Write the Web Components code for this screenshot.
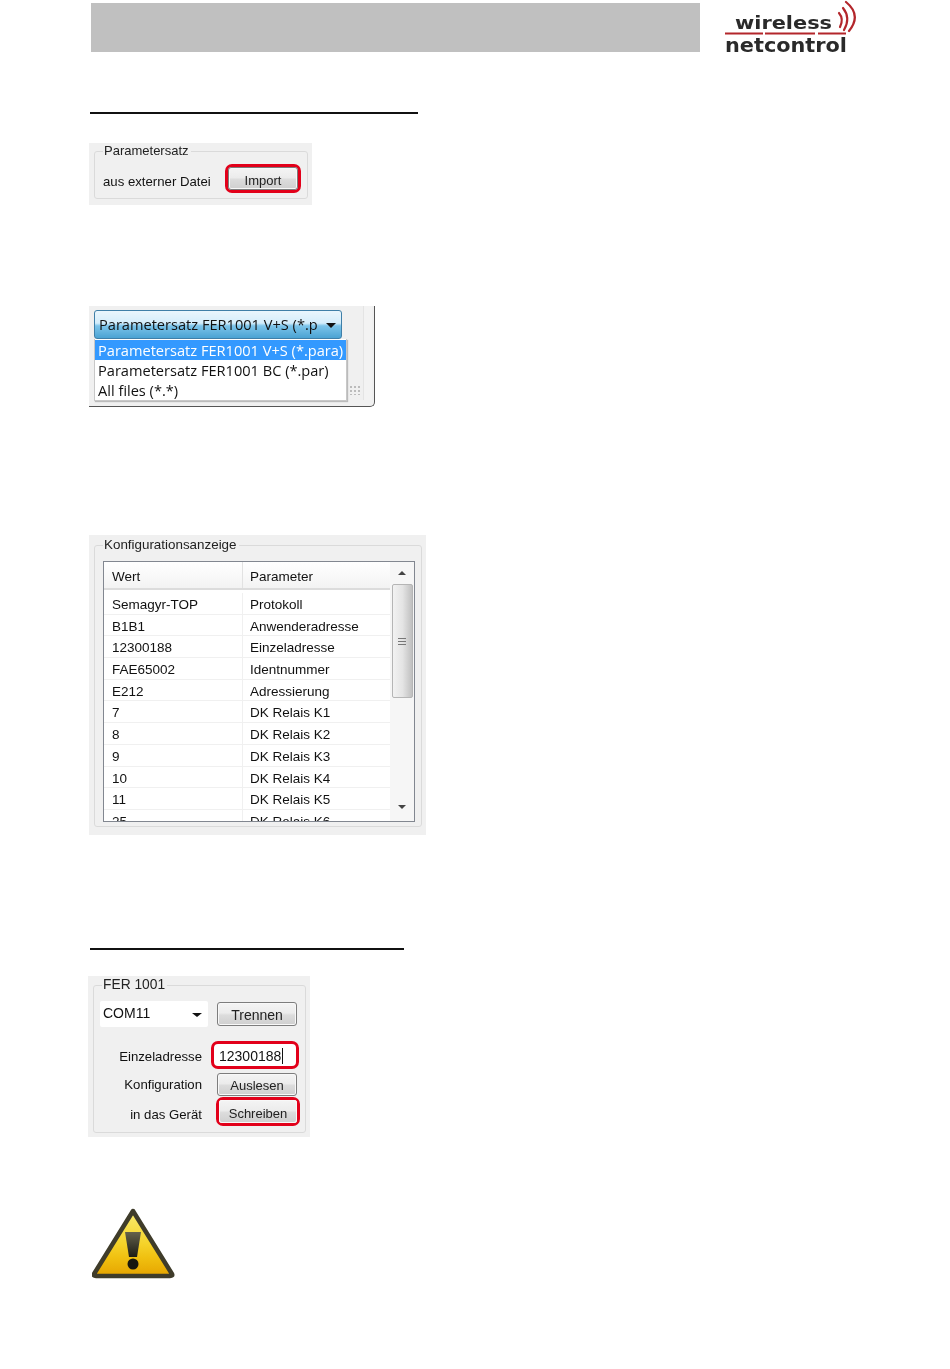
<!DOCTYPE html>
<html lang="de"><head><meta charset="utf-8"><title>FER 1001</title>
<style>
html,body{margin:0;background:#fff;}
body{font-family:"Liberation Sans",Arial,sans-serif;color:#111;overflow:hidden;}
</style></head><body>
<wn-page>
  <wn-header></wn-header>
  <wn-rule style="margin:60px 0 0 2px;width:328px"></wn-rule>
  <wn-import style="margin:29px 0 0 1px"></wn-import>
  <wn-filetype style="margin:101px 0 0 1px"></wn-filetype>
  <wn-config style="margin:128px 0 0 1px"></wn-config>
  <wn-rule style="margin:113px 0 0 2px;width:314px"></wn-rule>
  <wn-device style="margin:26px 0 0 0"></wn-device>
  <wn-warning style="margin:70px 0 0 4px"></wn-warning>
</wn-page>
<script>
const base=`
*{box-sizing:border-box}
:host{box-sizing:border-box}
fieldset{margin:0;border:1px solid #dadada;border-radius:3px;min-width:0}
legend{padding:0 2px 0 1px;line-height:14px;font-size:13px;color:#222}
.btn{display:flex;align-items:center;justify-content:center;border:1px solid #7d7d7d;border-radius:3px;
 background:linear-gradient(#f4f4f4 0,#ececec 45%,#dcdcdc 55%,#cfcfcf 100%);box-shadow:inset 0 0 0 1px #f8f8f8;font-size:13px;color:#222;}
.ring{display:flex;border:3px solid #e2001a;border-radius:7px;}
`;
function def(name,html){
  customElements.define(name,class extends HTMLElement{
    constructor(){super();this.attachShadow({mode:'open'}).innerHTML=html;}
  });
}
def('wn-page',`<style>:host{display:flex;flex-direction:column;align-items:flex-start;padding-left:88px;height:1369px;box-sizing:border-box}</style><slot></slot>`);
def('wn-rule',`<style>:host{display:block;height:2px;background:#111}</style>`);
def('wn-header',`<style>
:host{display:flex;align-items:flex-start;height:52px;width:780px}
.bar{margin:3px 0 0 3px;width:609px;height:49px;background:#c0c0c0}
svg{margin-left:22px;display:block;filter:blur(.35px)}
text{font-family:"DejaVu Sans",sans-serif;font-weight:700;fill:#2a2a2a}
</style><div class="bar"></div>
<svg width="140" height="56" viewBox="0 0 140 56" role="img" aria-label="wireless netcontrol">
<text x="13" y="28.5" font-size="18.5" textLength="97" lengthAdjust="spacingAndGlyphs">wireless</text>
<text x="3" y="51.5" font-size="20" textLength="122" lengthAdjust="spacingAndGlyphs">netcontrol</text>
<path d="M3 33.5H41M43 33.5H93M96 33.5H124" stroke="#b3262b" stroke-width="2" fill="none"/>
<g fill="none" stroke="#b3262b" stroke-width="2.2" stroke-linecap="round">
<path d="M117 13Q122 19 118 27"/><path d="M121 8Q129 18 122 30"/><path d="M124 2Q140 15 127 31"/>
</g></svg>`);
def('wn-import',`<style>${base}
:host{display:block;width:223px;height:62px;background:#f0f0f0;padding:1px 4px 6px 5px;font-size:13.2px}
.in{filter:blur(.3px);height:100%}
fieldset{height:100%;padding:0 6px 0 8px;display:flex}
.row{display:flex;align-items:center;height:100%;}
.lab{width:122px;margin-top:7px}
.ring{width:76px;height:29px;margin-top:0;}
.btn{flex:1;padding-top:5px}
</style><div class="in"><fieldset><legend>Parametersatz</legend>
<div class="row"><span class="lab">aus externer Datei</span><div class="ring"><div class="btn">Import</div></div></div>
</fieldset></div>`);
def('wn-filetype',`<style>${base}
:host{display:block;position:relative;width:286px;height:101px;background:#f0f0f0;border-right:1px solid #555;border-bottom:1px solid #555;border-bottom-right-radius:5px;font-family:"Open Sans",sans-serif;font-size:14.6px;color:#111}
.in{filter:blur(.3px);height:100%;padding:4px 0 0 5px}
.sb{position:absolute;right:2px;top:0;bottom:6px;width:9px;border-left:1px solid #e4e4e4;background:#f3f3f3}
.combo{width:248px;height:29px;border:1px solid #3f7fa8;border-radius:3px;background:linear-gradient(#eaf6fd 0,#d4edfb 45%,#7cc4ea 55%,#4ba3d3 100%);display:flex;align-items:center;padding:0 5px 2px 4px;justify-content:space-between}
.clip{width:218px;overflow:hidden;white-space:nowrap}
.arrow{width:0;height:0;border:5px solid transparent;border-top:5px solid #111;border-bottom:0;margin-top:3px}
.menu{position:absolute;left:5px;top:33px;width:253px;height:62px;background:#fff;border:1px solid #c8c8c8;border-top:0;box-shadow:1px 1px 1px #bbb;white-space:nowrap}
.it{height:20px;line-height:20px;padding-left:3px}
.sel{background:#3399ff;color:#fff;margin-top:1px}
.grip{position:absolute;right:13px;bottom:11px;width:12px;height:10px;background-image:radial-gradient(#bbb 1px,transparent 1.2px);background-size:4px 4px}
</style><div class="in"><div class="sb"></div>
<div class="combo"><span class="clip">Parametersatz FER1001 V+S (*.para)</span><span class="arrow"></span></div>
<div class="grip"></div>
<div class="menu"><div class="it sel">Parametersatz FER1001 V+S (*.para)</div><div class="it">Parametersatz FER1001 BC (*.par)</div><div class="it">All files (*.*)</div></div></div>`);
const rows=[["Semagyr-TOP","Protokoll"],["B1B1","Anwenderadresse"],["12300188","Einzeladresse"],["FAE65002","Identnummer"],["E212","Adressierung"],["7","DK Relais K1"],["8","DK Relais K2"],["9","DK Relais K3"],["10","DK Relais K4"],["11","DK Relais K5"],["25","DK Relais K6"]];
def('wn-config',`<style>${base}
:host{display:block;width:337px;height:300px;background:#f0f0f0;padding:3px 4px 8px 5px;font-size:13.5px}
.in{filter:blur(.3px);height:100%}
fieldset{height:100%;padding:1px 6px 0 8px}
legend{font-size:13.4px;margin-top:2px}
.list{height:261px;width:312px;border:1px solid #828790;background:#fff;display:grid;grid-template-columns:1fr 24px;overflow:hidden;margin-top:8px}
.main{overflow:hidden}
.hd,.r{display:grid;grid-template-columns:138px 148px}
.hd{height:28px;background:linear-gradient(#fff,#f3f3f3);border-bottom:2px solid #dcdcdc;margin-bottom:3px}
.hd span{height:100%;display:flex;align-items:center;padding-top:2px}
.hd span+span{border-left:1px solid #e2e2e2}
.hd span,.r span{padding-left:8px}
.hd span+span,.r span+span{padding-left:7px}
.r{height:21.7px;line-height:23px;border-bottom:1px solid #f0f0f0}
.r span+span{border-left:1px solid #f0f0f0;}
.sb{display:flex;flex-direction:column;align-items:center;background:#f6f6f6;position:relative}
.up,.dn{width:0;height:0;border:4px solid transparent}
.up{border-bottom:4px solid #444;border-top:0;margin:9px 0 9px}
.dn{position:absolute;bottom:12px;border-top:4px solid #444;border-bottom:0}
.th{width:21px;height:114px;border:1px solid #b5b5b5;border-radius:2px;background:linear-gradient(90deg,#f2f2f2,#e4e4e4 50%,#c0c0c0);display:flex;flex-direction:column;gap:2px;align-items:center;justify-content:center}
.th i{display:block;width:8px;height:1px;background:#777}
</style><div class="in"><fieldset><legend>Konfigurationsanzeige</legend>
<div class="list"><div class="main"><div class="hd"><span>Wert</span><span>Parameter</span></div>
${rows.map(r=>`<div class="r"><span>${r[0]}</span><span>${r[1]}</span></div>`).join('')}</div>
<div class="sb"><div class="up"></div><div class="th"><i></i><i></i><i></i></div><div class="dn"></div></div></div>
</fieldset></div>`);
def('wn-device',`<style>${base}
:host{display:block;width:222px;height:161px;background:#f0f0f0;padding:2px 4px 4px 5px;font-size:13.2px}
.in{filter:blur(.3px);height:100%}
fieldset{height:100%;padding:0 6px 0 6px}
legend{margin-left:2px;font-size:13.8px}
.top{display:flex;gap:9px;margin-top:9px;align-items:flex-start}
.combo{width:108px;height:26px;background:#fff;border-radius:2px;display:flex;align-items:center;justify-content:space-between;padding:0 6px 2px 3px;font-size:14px}
.arrow{width:0;height:0;border:5px solid transparent;border-top:4px solid #111;border-bottom:0;margin-top:3px}
.btn{width:80px;height:24px;padding-top:1px}
.top .btn{margin-top:1px;font-size:14px}
.grid{display:grid;grid-template-columns:102px 88px;column-gap:9px;margin-top:14px;margin-right:-3px}
.lab{text-align:right;display:flex;align-items:center;justify-content:flex-end;padding-top:2px}
.lab.low{padding-top:5px}
.addr{height:28px;width:88px;background:#fff;align-items:center;padding:1px 0 0 5px;font-size:14px}
.caret{display:inline-block;width:1px;height:16px;background:#111;margin-left:1px}
.plain{margin:4px 0 1px 6px;height:23px;width:80px}
.ring.s{height:29px;width:84px;margin-left:5px;padding:0}
.ring.s .btn{width:100%;height:100%;border:0;padding:3px 0 0}
</style><div class="in"><fieldset><legend>FER 1001</legend>
<div class="top"><div class="combo">COM11<span class="arrow"></span></div><div class="btn">Trennen</div></div>
<div class="grid">
<span class="lab">Einzeladresse</span><div class="ring addr">12300188<span class="caret"></span></div>
<span class="lab">Konfiguration</span><div class="btn plain">Auslesen</div>
<span class="lab low">in das Gerät</span><div class="ring s"><div class="btn">Schreiben</div></div>
</div></fieldset></div>`);
def('wn-warning',`<style>:host{display:block;width:84px;height:74px}svg{display:block;filter:blur(.5px)}</style>
<svg width="84" height="74" viewBox="0 0 84 74" role="img" aria-label="Warnung">
<defs><linearGradient id="y" x1="0" y1="0" x2="0" y2="1"><stop offset="0" stop-color="#f9ec70"/><stop offset=".5" stop-color="#f5d32a"/><stop offset=".72" stop-color="#f0c010"/><stop offset="1" stop-color="#e6a400"/></linearGradient>
<linearGradient id="b" x1="0" y1="0" x2="0" y2="1"><stop offset="0" stop-color="#65624c"/><stop offset="1" stop-color="#1c1c14"/></linearGradient></defs>
<path d="M41 4 L80 67 Q81 69 78 69 L4 69 Q1 69 2 67 Z" fill="url(#y)" stroke="#3f3c2a" stroke-width="4.5" stroke-linejoin="round"/>
<path d="M33 25 H49 L45 50 H37 Z" fill="url(#b)"/>
<circle cx="41" cy="57" r="5.5" fill="#17170f"/>
</svg>`);
</script>
</body></html>
